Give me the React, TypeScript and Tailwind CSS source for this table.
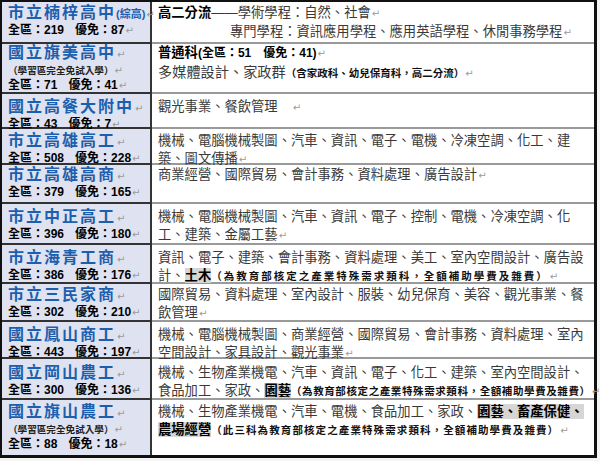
import React from "react";

const Mark = () => (
  <span className="ml-[1px] font-['DejaVu_Sans',sans-serif] text-[10px] font-normal tracking-normal text-[#9a9a9a]">
    ↵
  </span>
);

const Hi = ({ children }: { children: React.ReactNode }) => (
  <span className="bg-[#d6d6d6] font-bold text-black">{children}</span>
);

const Note = ({
  children,
  track = "tracking-normal",
}: {
  children: React.ReactNode;
  track?: string;
}) => <span className={`text-[10.5px] font-bold text-[#111] ${track}`}>{children}</span>;

type School = {
  h: string;
  pt: string;
  name: string;
  tag?: string;
  sub?: boolean;
  all: string;
  ex: string;
  right: React.ReactNode;
};

const schools: School[] = [
  {
    h: "h-[42px]",
    pt: "pt-[2px]",
    name: "市立楠梓高中",
    tag: "(綜高)",
    all: "219",
    ex: "87",
    right: (
      <>
        <div>
          <span className="font-bold text-black">高二分流</span>——學術學程：自然、社會
          <Mark />
        </div>
        <div className="pl-[72px]">
          專門學程：資訊應用學程、應用英語學程、休閒事務學程
          <Mark />
        </div>
      </>
    ),
  },
  {
    h: "h-[50px]",
    pt: "pt-0",
    name: "國立旗美高中",
    sub: true,
    all: "71",
    ex: "41",
    right: (
      <>
        <div className="font-bold text-black">
          普通科
          <span className="font-['Liberation_Sans','Noto_Sans_CJK_TC',sans-serif] text-[12px]">
            (全區：51　優免：41)
          </span>
          <Mark />
        </div>
        <div>
          <span className="text-[14.2px]">多媒體設計、家政群</span>
          <Note>（含家政科、幼兒保育科，高二分流）</Note>
          <Mark />
        </div>
      </>
    ),
  },
  {
    h: "h-[35px]",
    pt: "pt-[4px]",
    name: "國立高餐大附中",
    all: "43",
    ex: "7",
    right: (
      <div>
        觀光事業、餐飲管理
        <span className="ml-[14px]">
          <Mark />
        </span>
      </div>
    ),
  },
  {
    h: "h-[36px]",
    pt: "pt-[3px]",
    name: "市立高雄高工",
    all: "508",
    ex: "228",
    right: (
      <>
        <div>機械、電腦機械製圖、汽車、資訊、電子、電機、冷凍空調、化工、建</div>
        <div>
          築、圖文傳播
          <Mark />
        </div>
      </>
    ),
  },
  {
    h: "h-[39px]",
    pt: "pt-[1px]",
    name: "市立高雄高商",
    all: "379",
    ex: "165",
    right: (
      <div>
        商業經營、國際貿易、會計事務、資料處理、廣告設計
        <Mark />
      </div>
    ),
  },
  {
    h: "h-[41px]",
    pt: "pt-[4px]",
    name: "市立中正高工",
    all: "396",
    ex: "180",
    right: (
      <>
        <div>機械、電腦機械製圖、汽車、資訊、電子、控制、電機、冷凍空調、化</div>
        <div>
          工、建築、金屬工藝
          <Mark />
        </div>
      </>
    ),
  },
  {
    h: "h-[39px]",
    pt: "pt-[4px]",
    name: "市立海青工商",
    all: "386",
    ex: "176",
    right: (
      <>
        <div>資訊、電子、建築、會計事務、資料處理、美工、室內空間設計、廣告設</div>
        <div>
          計、<Hi>土木</Hi>
          <Note track="tracking-[2px]">（為教育部核定之產業特殊需求類科，全額補助學費及雜費）</Note>
          <Mark />
        </div>
      </>
    ),
  },
  {
    h: "h-[38px]",
    pt: "pt-[2px]",
    name: "市立三民家商",
    all: "302",
    ex: "210",
    right: (
      <>
        <div>國際貿易、資料處理、室內設計、服裝、幼兒保育、美容、觀光事業、餐</div>
        <div>
          飲管理
          <Mark />
        </div>
      </>
    ),
  },
  {
    h: "h-[37px]",
    pt: "pt-[4px]",
    name: "國立鳳山商工",
    all: "443",
    ex: "197",
    right: (
      <>
        <div>機械、電腦機械製圖、商業經營、國際貿易、會計事務、資料處理、室內</div>
        <div>
          空間設計、家具設計、觀光事業
          <Mark />
        </div>
      </>
    ),
  },
  {
    h: "h-[41px]",
    pt: "pt-[5px]",
    name: "國立岡山農工",
    all: "300",
    ex: "136",
    right: (
      <>
        <div>機械、生物產業機電、汽車、資訊、電子、化工、建築、室內空間設計、</div>
        <div>
          食品加工、家政、<Hi>園藝</Hi>
          <Note track="tracking-[0.6px]">（為教育部核定之產業特殊需求類科，全額補助學費及雜費）</Note>
          <Mark />
        </div>
      </>
    ),
  },
  {
    h: "h-[55px]",
    pt: "pt-[3px]",
    name: "國立旗山農工",
    sub: true,
    all: "88",
    ex: "18",
    right: (
      <>
        <div>
          機械、生物產業機電、汽車、電機、食品加工、家政、<Hi>園藝、畜產保健、</Hi>
        </div>
        <div>
          <Hi>農場經營</Hi>
          <Note track="tracking-[1.1px]">（此三科為教育部核定之產業特殊需求類科，全額補助學費及雜費）</Note>
          <Mark />
        </div>
      </>
    ),
  },
];

export default function App() {
  return (
    <div className="h-[461px] w-[600px] overflow-hidden bg-[#f4f4f4] font-['Liberation_Sans','Noto_Sans_CJK_TC',sans-serif]">
      <div className="flex w-[597px] flex-col border-b-[3px] border-l-2 border-r-[3px] border-t-2 border-[#111] bg-white">
        {schools.map((s, i) => {
          const last = i === schools.length - 1;
          return (
            <div key={s.name} className={`flex shrink-0 ${s.h}`}>
              <div
                className={`w-[150px] shrink-0 border-r-2 border-[#333] bg-[#dfe2f0] pl-[6px] ${s.pt} ${
                  last ? "" : "border-b-2"
                }`}
              >
                <div className="whitespace-nowrap text-[16px] font-bold leading-[17px] tracking-[2px] text-[#1c5fae]">
                  {s.name}
                  {s.tag && (
                    <span className="text-[11px] tracking-normal text-[#1c5fae]">{s.tag}</span>
                  )}
                  <Mark />
                </div>
                {s.sub && (
                  <div className="whitespace-nowrap text-[9.6px] font-bold leading-[15px] text-[#222]">
                    （學習區完全免試入學）
                    <Mark />
                  </div>
                )}
                <div className="whitespace-nowrap text-[12px] font-bold leading-[15px] text-black">
                  全區：{s.all}
                  <span className="ml-[11px]">優免：{s.ex}</span>
                  <Mark />
                </div>
              </div>
              <div
                className={`min-w-0 flex-1 whitespace-nowrap pl-[6px] text-[13.3px] leading-[18px] text-[#3a3a3a] ${s.pt} ${
                  last ? "" : "border-b-2 border-[#9a9a9a]"
                }`}
              >
                {s.right}
              </div>
            </div>
          );
        })}
      </div>
    </div>
  );
}
